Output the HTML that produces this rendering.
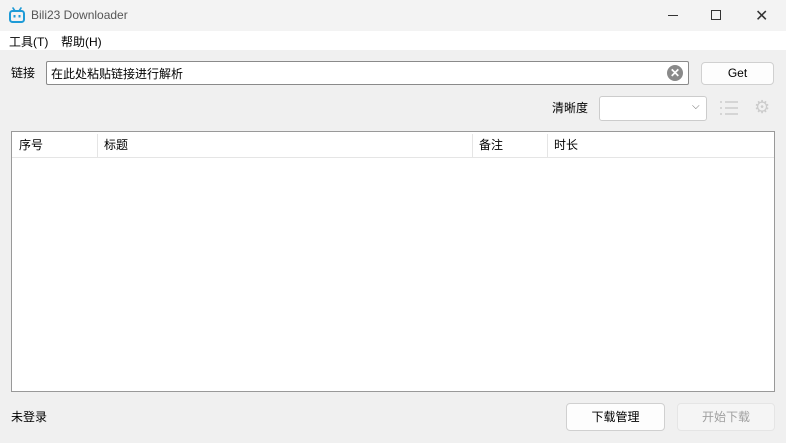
<!DOCTYPE html>
<html><head><meta charset="utf-8"><style>
*{box-sizing:border-box;margin:0;padding:0}
body{width:786px;height:443px;background:#f0f0f0;font-family:"Liberation Sans","Noto Sans CJK SC",sans-serif;font-size:12px;color:#000;position:relative;overflow:hidden}
.abs{position:absolute}
.title{left:0;top:0;width:786px;height:31px;background:#f3f3f3}
.menu{left:0;top:31px;width:786px;height:19px;background:#fff}
.btn{position:absolute;background:#fdfdfd;border:1px solid #d0d0d0;border-radius:4px;text-align:center;font-size:12px}
</style></head><body>
<div class="abs title">
<svg class="abs" style="left:9px;top:7px" width="16" height="16" viewBox="0 0 16 16"><path d="M4 1 L6 4 M12 1 L10 4" stroke="#1e9bd7" stroke-width="1.6" stroke-linecap="round"/><rect x="1" y="4" width="14" height="11" rx="2.5" fill="none" stroke="#1e9bd7" stroke-width="2"/><rect x="4.5" y="8" width="2" height="2.5" fill="#1e9bd7"/><rect x="9.5" y="8" width="2" height="2.5" fill="#1e9bd7"/></svg>
<div class="abs" style="left:31px;top:8px;color:#555;font-size:12px">Bili23 Downloader</div>
<div class="abs" style="left:668px;top:15px;width:10px;height:1px;background:#333"></div>
<div class="abs" style="left:711px;top:10px;width:10px;height:10px;border:1px solid #333"></div>
<div class="abs" style="left:755px;top:6px;font-size:16px;color:#333">✕</div>
</div>
<div class="abs menu"><span class="abs" style="left:9px;top:2px">工具(T)</span><span class="abs" style="left:61px;top:2px">帮助(H)</span></div>
<div class="abs" style="left:11px;top:64px">链接</div>
<div class="abs" style="left:46px;top:61px;width:643px;height:24px;background:#fff;border:1px solid #8a8a8a;border-radius:2px"><span class="abs" style="left:4px;top:3px">在此处粘贴链接进行解析</span>
<div class="abs" style="left:620px;top:3px;width:16px;height:16px;border-radius:50%;background:#8a8a8a;color:#fff;font-size:12px;line-height:16px;text-align:center;font-weight:bold">✕</div></div>
<div class="btn" style="left:701px;top:62px;width:73px;height:23px;line-height:21px">Get</div>
<div class="abs" style="left:552px;top:99px">清晰度</div>
<div class="abs" style="left:599px;top:96px;width:108px;height:25px;background:#fff;border:1px solid #ccc;border-radius:3px"><span class="abs" style="left:92px;top:4px;font-size:10px;color:#666">⌵</span></div>
<svg class="abs" style="left:719px;top:99px" width="20" height="18"><g stroke="#ccc" stroke-width="1.5"><path d="M6 3H19M6 9H19M6 15H19M1 3H3M1 9H3M1 15H3"/></g></svg>
<div class="abs" style="left:754px;top:97px;font-size:18px;color:#ccc">⚙</div>
<div class="abs" style="left:11px;top:131px;width:764px;height:261px;background:#fff;border:1px solid #999">
<div class="abs" style="left:0;top:0;width:762px;height:26px;border-bottom:1px solid #e5e5e5"></div>
<div class="abs" style="left:7px;top:4px">序号</div>
<div class="abs" style="left:85px;top:2px;width:1px;height:23px;background:#e5e5e5"></div>
<div class="abs" style="left:92px;top:4px">标题</div>
<div class="abs" style="left:460px;top:2px;width:1px;height:23px;background:#e5e5e5"></div>
<div class="abs" style="left:467px;top:4px">备注</div>
<div class="abs" style="left:535px;top:2px;width:1px;height:23px;background:#e5e5e5"></div>
<div class="abs" style="left:542px;top:4px">时长</div>
</div>
<div class="abs" style="left:11px;top:408px">未登录</div>
<div class="btn" style="left:566px;top:403px;width:99px;height:28px;line-height:26px">下载管理</div>
<div class="btn" style="left:677px;top:403px;width:98px;height:28px;line-height:26px;background:#f5f5f5;border-color:#e5e5e5;color:#a0a0a0">开始下载</div>
</body></html>
